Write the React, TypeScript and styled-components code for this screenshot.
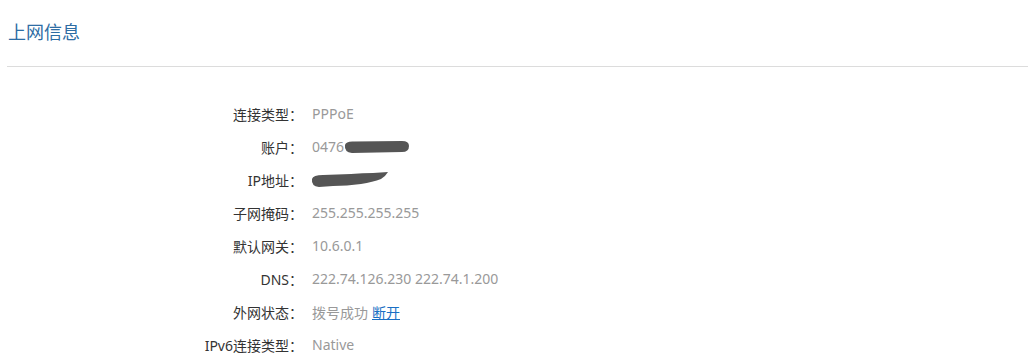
import React from 'react'
import styled, { createGlobalStyle } from 'styled-components'

const GlobalStyle = createGlobalStyle`
  body {
    margin: 0;
    background: #fff;
    font-family: "Noto Sans", "Noto Sans CJK SC", sans-serif;
  }
`

const Page = styled.div`
  width: 1030px;
  padding: 0 2px 0 7px;
  box-sizing: border-box;
`
const TitleBar = styled.div`
  height: 66px;
  display: flex;
  align-items: center;
  border-bottom: 1px solid #dcdcdc;
`
const Title = styled.h2`
  margin: 0 0 2px 1px;
  font-size: 18px;
  font-weight: normal;
  color: #2e6da4;
  line-height: 24px;
`
const InfoList = styled.dl`
  margin: 30px 0 0;
  padding: 0;
`
const Row = styled.div`
  display: flex;
  align-items: center;
  height: 33px;
  font-size: 14px;
`
const Label = styled.dt`
  width: 296px;
  text-align: right;
  color: #333;
`
const Value = styled.dd`
  margin: 0;
  padding-left: 9px;
  color: #999;
  display: flex;
  align-items: center;
`
const Link = styled.a`
  color: #1a6fc4;
  text-decoration: underline;
  margin-left: 4px;
  cursor: pointer;
`
const Mask = styled.svg`
  display: block;
`

const rows: { label: string; value: React.ReactNode }[] = [
  { label: '连接类型：', value: 'PPPoE' },
  {
    label: '账户：',
    value: (
      <>
        0476
        <Mask width="66" height="14" viewBox="0 0 66 14">
          <path d="M1 5 Q2 1 10 1.5 L58 1 Q65 1 65 6 Q65 12 58 12 L8 13 Q0 12 1 5 Z" fill="#555" />
        </Mask>
      </>
    ),
  },
  {
    label: 'IP地址：',
    value: (
      <Mask width="78" height="16" viewBox="0 0 78 16" style={{ marginLeft: -1 }}>
        <path d="M1 7 Q2 3 12 3 L40 2 Q52 1 62 1 L77 0 Q74 5 70 7 Q62 10 50 12 Q36 14 22 14 L8 15 Q0 14 1 7 Z" fill="#555" />
      </Mask>
    ),
  },
  { label: '子网掩码：', value: '255.255.255.255' },
  { label: '默认网关：', value: '10.6.0.1' },
  { label: 'DNS：', value: '222.74.126.230 222.74.1.200' },
  {
    label: '外网状态：',
    value: (
      <>
        拨号成功<Link>断开</Link>
      </>
    ),
  },
  { label: 'IPv6连接类型：', value: 'Native' },
]

export default function App() {
  return (
    <>
      <GlobalStyle />
      <Page>
        <TitleBar>
          <Title>上网信息</Title>
        </TitleBar>
        <InfoList>
          {rows.map((row, index) => (
            <Row key={index}>
              <Label>{row.label}</Label>
              <Value>{row.value}</Value>
            </Row>
          ))}
        </InfoList>
      </Page>
    </>
  )
}
